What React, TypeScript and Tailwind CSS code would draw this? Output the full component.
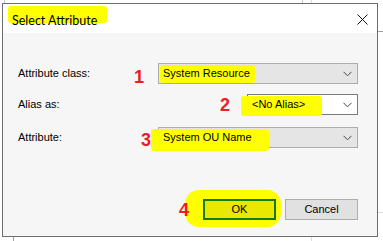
import React from 'react';

const LABEL_FONT = { fontFamily: '"Liberation Sans", Arial, sans-serif' };
const TITLE_FONT = { fontFamily: 'Lato, "Noto Sans", sans-serif' };

function Chevron() {
  return (
    <svg width="9" height="6" viewBox="0 0 9 6" className="shrink-0">
      <path d="M0.5 0.8 L4.5 4.8 L8.5 0.8" fill="none" stroke="#444" strokeWidth="1" />
    </svg>
  );
}

function Combo({
  value,
  width,
  white,
  hl,
}: {
  value: string;
  width: string;
  white?: boolean;
  hl: string;
}) {
  return (
    <div
      className={`relative flex h-[21px] ${width} items-center justify-between border pl-[4px] pr-[5px] ${
        white ? 'border-[#7a7a7a] bg-white' : 'border-[#adadad] bg-[#e5e5e5]'
      }`}
    >
      <span className={`pointer-events-none absolute rounded-[3px] bg-[#ffff00] ${hl}`}></span>
      <span className="relative text-[11px] text-black" style={LABEL_FONT}>
        {value}
      </span>
      <Chevron />
    </div>
  );
}

function Marker({ n, className }: { n: string; className: string }) {
  return (
    <span
      className={`relative z-10 text-[18px] leading-none font-bold text-[#ee1c25] ${className}`}
      style={LABEL_FONT}
    >
      {n}
    </span>
  );
}

export default function App() {
  return (
    <div className="relative h-[241px] w-[383px] overflow-hidden bg-white">
      {/* window fragments behind the dialog */}
      <div className="absolute left-[4px] top-0 h-[4px] w-px bg-[#c8c8c8]"></div>
      <div className="absolute left-[302px] top-0 h-[4px] w-px bg-[#c8c8c8]"></div>
      <div className="absolute left-[311px] top-0 h-[4px] w-px bg-[#dcdcdc]"></div>
      <div className="absolute left-[377px] top-[31px] h-px w-[6px] bg-[#a0a0a0]"></div>
      <div className="absolute left-[377px] top-[212px] h-px w-[6px] bg-[#dcdcdc]"></div>
      <div className="absolute left-[13px] top-[236px] h-[5px] w-px bg-[#a0a0a0]"></div>
      <div className="absolute left-[311px] top-[236px] h-[5px] w-px bg-[#dcdcdc]"></div>

      <div className="relative ml-[2px] mt-[3px] flex h-[234px] w-[376px] flex-col border border-[#6d6d6d] bg-[#f6f6f6]">
        {/* title bar */}
        <div className="flex h-[29px] shrink-0 items-center justify-between bg-white pl-[9px] pr-[9px]">
          <span className="relative">
            <span className="absolute -left-[4px] -top-[1px] h-[17px] w-[99px] rounded-[3px] bg-[#ffff00]"></span>
            <span className="relative text-[12.5px] text-black" style={TITLE_FONT}>
              Select Attribute
            </span>
          </span>
          <svg width="11" height="11" viewBox="0 0 11 11" className="mt-[1px]">
            <path d="M0.5 0.5 L10.5 10.5 M10.5 0.5 L0.5 10.5" stroke="#111" strokeWidth="1" />
          </svg>
        </div>

        {/* body */}
        <div className="flex flex-1 flex-col pl-[15px] pr-[19px] pt-[30px]">
          <div className="flex h-[21px] items-center">
            <span className="flex-1 text-[11px] text-black" style={LABEL_FONT}>
              Attribute class:
            </span>
            <Marker n="1" className="mr-[14px] mt-[6px]" />
            <Combo
              value="System Resource"
              width="w-[200px]"
              hl="left-[1px] top-[1px] h-[18px] w-[95px]"
            />
          </div>

          <div className="mt-[10px] flex h-[21px] items-center">
            <span className="flex-1 text-[11px] text-black" style={LABEL_FONT}>
              Alias as:
            </span>
            <Marker n="2" className="mr-[17px] mt-[1px]" />
            <Combo
              value="<No Alias>"
              width="w-[111px]"
              white
              hl="-left-[7px] top-[1px] h-[20px] w-[81px]"
            />
          </div>

          <div className="mt-[12px] flex h-[21px] items-center">
            <span className="flex-1 text-[11px] text-black" style={LABEL_FONT}>
              Attribute:
            </span>
            <Marker n="3" className="mr-[7px] mt-[5px]" />
            <Combo
              value="System OU Name"
              width="w-[200px]"
              hl="-left-[8px] top-[1px] h-[22px] w-[118px]"
            />
          </div>

          <div className="mt-[51px] flex items-center justify-end">
            <Marker n="4" className="mr-[14px] mt-[1px]" />
            <div className="relative">
              <span className="absolute -left-[18px] -top-[9px] h-[37px] w-[96px] rounded-[14px] bg-[#ffff00]"></span>
              <button
                className="relative flex h-[21px] w-[73px] items-center justify-center border-2 border-[#147a14] bg-[#e8e800] text-[11px] text-black"
                style={LABEL_FONT}
              >
                OK
              </button>
            </div>
            <button
              className="ml-[9px] flex h-[21px] w-[73px] items-center justify-center border border-[#adadad] bg-[#e1e1e1] text-[11px] text-black"
              style={LABEL_FONT}
            >
              Cancel
            </button>
          </div>
        </div>
      </div>
    </div>
  );
}
